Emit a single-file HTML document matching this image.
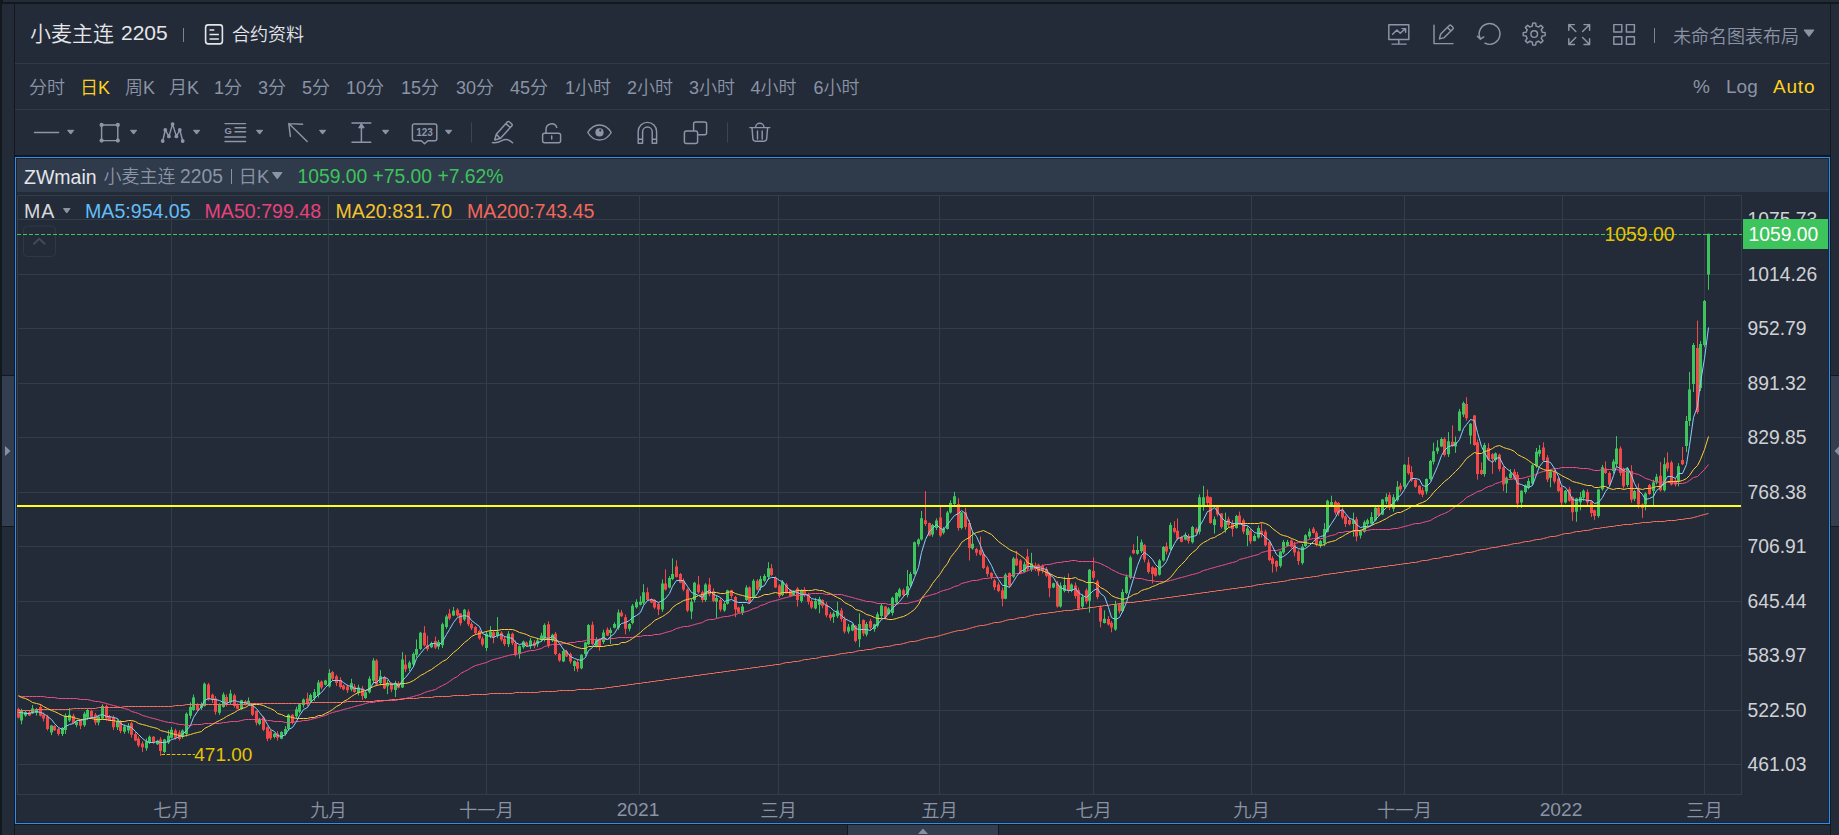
<!DOCTYPE html>
<html lang="zh"><head><meta charset="utf-8"><title>chart</title><style>
*{margin:0;padding:0;box-sizing:border-box}
html,body{width:1839px;height:835px;overflow:hidden;background:#13181d}
body{position:relative;font-family:"Liberation Sans","Noto Sans CJK SC",sans-serif;color:#8b94a6;font-weight:350}
.a{position:absolute;white-space:nowrap}
.p{position:absolute;background:#242b38}
.t{position:absolute;white-space:nowrap;height:30px;line-height:30px}
svg{position:absolute;overflow:visible}
.ic{fill:none;stroke:#8d96a8;stroke-width:1.45;stroke-linecap:round;stroke-linejoin:round}
</style></head><body>
<div class="p" style="left:3px;top:0;width:1836px;height:2px"></div>
<div class="p" style="left:2px;top:4px;width:12px;height:831px"></div>
<div class="p" style="left:2px;top:375px;width:12px;height:152px;background:#13181d"></div><div class="p" style="left:2px;top:376px;width:12px;height:150px;background:#333f50"></div>
<div class="p" style="left:1831px;top:4px;width:8px;height:831px"></div>
<div class="p" style="left:1831px;top:375px;width:8px;height:152px;background:#13181d"></div><div class="p" style="left:1831px;top:376px;width:8px;height:150px;background:#333f50"></div>
<div class="p" style="left:15px;top:4px;width:1815px;height:151px"></div>
<div class="p" style="left:15px;top:63px;width:1815px;height:1px;background:#313b48"></div>
<div class="p" style="left:15px;top:109px;width:1815px;height:1px;background:#313b48"></div>
<div class="p" style="left:15px;top:825px;width:1815px;height:10px"></div>
<div class="p" style="left:847px;top:825px;width:152px;height:10px;background:#13181d"></div><div class="p" style="left:848px;top:825px;width:150px;height:10px;background:#333f50"></div>
<svg style="left:0;top:0" width="1839" height="835"><path d="M5,446v10l5.5,-5z M1840,445.5v11l-5.5,-5.5z M918,834h10l-5,-5.5z" fill="#8790a3"/></svg>
<div class="p" style="left:15px;top:157px;width:1815px;height:667px;border:1px solid #2890f3"><div style="position:absolute;inset:0;border:1px solid #20262f"></div></div>
<div class="p" style="left:17px;top:159px;width:1811px;height:33px;background:#2f3a4a"></div>
<svg style="left:0;top:0" width="1839" height="835" viewBox="0 0 1839 835">
<path d="M17,219.5H1742 M17,274.5H1742 M17,328.5H1742 M17,383.5H1742 M17,437.5H1742 M17,492.5H1742 M17,546.5H1742 M17,601.5H1742 M17,655.5H1742 M17,710.5H1742 M17,764.5H1742 M171.5,195V795 M328.5,195V795 M486.5,195V795 M639.5,195V795 M778.5,195V795 M939.5,195V795 M1093.5,195V795 M1251.5,195V795 M1404.5,195V795 M1562.5,195V795 M1704.5,195V795 M17.5,195V795 M1741.5,195V795 M17,195.5H1742 M17,794.5H1742" stroke="#323d4a" stroke-width="1" fill="none"/>
<rect x="23.5" y="226" width="32" height="30.5" rx="4" fill="none" stroke="#2f3844" stroke-width="1"/><path d="M33.5,244.2l5.8,-5.4l5.8,5.4" fill="none" stroke="#414b59" stroke-width="2"/>
<path d="M17,234.5H1742" stroke="#3dc45d" stroke-width="1" stroke-dasharray="4 2" fill="none"/>
<path d="M18.5,707.7V718.5M29.5,710.4V716.0M40.5,704.2V716.5M43.5,712.6V721.4M47.5,714.7V730.6M54.5,725.2V731.0M58.5,727.8V735.8M73.5,713.8V724.0M80.5,719.7V729.1M91.5,709.7V718.6M95.5,712.9V725.1M106.5,704.5V720.9M109.5,715.0V720.9M113.5,715.4V730.0M120.5,720.1V733.2M131.5,721.6V737.7M135.5,731.7V741.2M138.5,736.4V747.3M142.5,741.3V752.1M153.5,736.2V744.1M160.5,737.2V755.9M175.5,728.8V739.6M179.5,730.0V740.6M197.5,703.2V711.0M208.5,682.9V700.8M212.5,693.6V703.0M215.5,696.2V714.7M226.5,694.6V706.3M234.5,693.7V707.6M237.5,703.3V709.4M245.5,700.0V705.7M252.5,703.4V716.1M256.5,710.3V725.4M263.5,716.2V731.1M267.5,726.4V741.3M270.5,729.7V740.0M277.5,731.2V740.6M292.5,714.1V724.2M307.5,692.7V706.0M321.5,680.5V689.3M332.5,670.9V681.0M336.5,674.7V686.0M340.5,677.2V688.5M343.5,684.4V690.3M347.5,684.4V693.0M354.5,684.0V692.8M362.5,686.0V699.8M376.5,659.1V686.0M384.5,675.9V689.2M391.5,682.5V692.1M398.5,681.4V688.5M405.5,654.8V672.1M424.5,626.1V646.5M427.5,635.7V651.1M435.5,636.6V649.0M449.5,608.9V620.2M457.5,608.2V616.5M460.5,613.1V625.7M468.5,609.4V626.1M471.5,622.1V630.1M475.5,626.1V634.9M479.5,629.8V639.7M482.5,636.6V646.4M493.5,630.4V643.3M501.5,631.2V641.3M504.5,636.1V646.1M512.5,632.6V645.2M515.5,640.5V656.5M526.5,641.5V646.6M534.5,640.2V648.3M548.5,621.3V647.8M555.5,632.0V655.2M559.5,652.9V661.9M566.5,649.7V657.0M570.5,652.5V663.6M577.5,659.4V671.8M592.5,621.6V645.5M599.5,638.3V650.7M607.5,627.4V636.1M621.5,609.9V616.9M625.5,614.5V634.4M647.5,587.5V601.0M651.5,598.3V603.2M654.5,598.9V608.9M658.5,602.5V615.2M665.5,569.3V590.6M676.5,560.3V577.5M680.5,572.9V583.2M683.5,578.4V591.3M687.5,588.4V612.1M698.5,576.0V593.8M702.5,590.5V602.5M709.5,577.9V596.4M713.5,588.3V602.2M720.5,597.7V611.6M731.5,589.7V598.4M735.5,595.9V617.2M738.5,606.7V613.1M749.5,586.4V604.0M757.5,579.2V590.5M771.5,564.1V576.3M775.5,576.5V588.0M779.5,584.1V597.8M786.5,582.8V593.7M790.5,589.2V596.8M797.5,587.2V606.6M804.5,587.3V597.0M808.5,592.8V604.5M811.5,599.4V608.9M822.5,599.3V608.3M826.5,602.0V617.3M830.5,612.0V620.7M841.5,607.9V621.6M844.5,616.5V633.5M855.5,625.0V642.5M863.5,619.3V636.0M870.5,618.9V629.9M885.5,606.0V619.5M903.5,588.5V597.2M925.5,491.1V526.0M929.5,522.6V536.2M940.5,506.8V536.8M958.5,498.2V530.7M965.5,507.8V529.5M969.5,520.2V560.5M976.5,547.9V555.7M980.5,536.5V555.7M983.5,551.8V569.0M987.5,565.4V576.8M991.5,572.1V579.3M994.5,578.8V590.0M998.5,582.1V592.2M1002.5,587.4V606.4M1009.5,572.4V587.1M1016.5,550.9V566.1M1020.5,559.1V574.2M1027.5,549.0V571.5M1035.5,562.6V571.2M1038.5,563.6V575.8M1042.5,564.4V573.4M1046.5,567.1V577.2M1049.5,572.3V597.2M1057.5,580.9V607.7M1068.5,573.5V592.9M1075.5,582.5V598.6M1078.5,587.6V610.4M1086.5,588.3V603.9M1093.5,557.6V580.0M1097.5,579.9V599.2M1100.5,605.3V627.5M1108.5,616.1V625.5M1111.5,621.0V632.3M1119.5,603.3V613.6M1133.5,544.2V554.1M1144.5,544.1V562.3M1148.5,559.4V573.6M1152.5,566.3V583.4M1155.5,567.1V576.5M1166.5,542.3V554.3M1174.5,521.2V533.3M1177.5,518.4V540.3M1181.5,535.8V542.3M1188.5,533.9V543.6M1196.5,527.3V534.4M1207.5,489.6V505.7M1210.5,496.7V523.7M1217.5,505.2V516.5M1221.5,513.1V528.5M1228.5,516.7V527.7M1232.5,520.2V536.6M1239.5,511.6V525.0M1243.5,518.5V534.0M1250.5,528.7V543.8M1261.5,523.1V537.4M1265.5,529.6V546.4M1269.5,541.1V561.2M1272.5,556.1V572.6M1276.5,560.3V571.6M1291.5,539.3V548.4M1294.5,541.9V556.3M1298.5,549.4V564.9M1313.5,527.0V533.5M1316.5,531.0V546.4M1335.5,500.5V514.8M1338.5,502.0V516.1M1342.5,507.4V519.2M1345.5,515.4V527.0M1349.5,517.5V525.4M1356.5,516.9V541.3M1378.5,504.9V516.3M1389.5,492.3V510.1M1400.5,483.0V491.9M1408.5,457.0V474.8M1411.5,466.2V481.9M1415.5,478.7V487.7M1419.5,485.3V494.6M1422.5,487.4V497.3M1444.5,437.2V456.6M1452.5,425.4V446.9M1466.5,397.2V420.7M1474.5,414.9V445.8M1477.5,439.5V479.6M1481.5,462.4V475.0M1488.5,443.2V460.8M1492.5,453.1V473.9M1499.5,453.6V471.4M1503.5,465.9V491.1M1514.5,469.0V479.9M1517.5,472.0V508.0M1543.5,442.3V461.4M1547.5,455.1V482.0M1554.5,469.5V483.6M1558.5,477.3V492.4M1561.5,485.9V505.1M1569.5,486.8V501.8M1572.5,496.6V520.8M1587.5,489.4V505.6M1591.5,500.5V517.0M1594.5,509.6V519.8M1605.5,461.4V474.0M1609.5,471.4V486.5M1620.5,446.4V475.8M1623.5,467.7V488.9M1631.5,465.2V502.6M1638.5,483.4V508.4M1642.5,503.5V517.9M1649.5,483.9V494.9M1660.5,462.0V491.5M1667.5,452.4V471.5M1671.5,460.6V485.5M1675.5,478.1V486.5M1682.5,447.0V465.0M1697.5,320.6V414.0" stroke="#f24848" stroke-width="1" fill="none"/>
<path d="M21.5,708.8V724.3M25.5,710.3V716.8M32.5,705.1V713.9M36.5,708.0V715.5M51.5,725.0V735.2M62.5,726.9V736.1M65.5,713.6V733.9M69.5,708.0V721.9M76.5,720.7V727.2M84.5,711.8V726.9M87.5,708.7V720.1M98.5,715.3V725.4M102.5,704.2V719.3M117.5,719.3V730.0M124.5,724.4V733.9M128.5,723.1V733.4M146.5,738.5V750.8M149.5,735.5V744.0M157.5,739.9V745.0M164.5,738.8V753.2M168.5,730.0V744.0M171.5,727.0V738.4M182.5,729.4V738.6M186.5,712.4V736.6M190.5,702.3V718.6M193.5,694.6V710.8M201.5,702.4V710.0M204.5,682.5V706.6M219.5,703.3V714.8M223.5,692.4V707.7M230.5,689.8V704.8M241.5,699.7V710.0M248.5,697.5V704.6M259.5,717.8V725.3M274.5,733.0V738.4M281.5,731.1V739.2M285.5,726.2V735.7M288.5,713.8V730.9M296.5,706.7V718.5M299.5,703.0V713.3M303.5,698.5V707.6M310.5,693.5V702.0M314.5,689.0V700.8M318.5,680.1V697.6M325.5,679.8V685.4M329.5,669.2V687.6M351.5,678.8V691.3M358.5,684.7V695.5M365.5,690.5V698.9M369.5,676.3V693.5M373.5,658.1V683.6M380.5,670.2V685.4M387.5,680.0V694.1M395.5,680.8V697.0M402.5,652.0V687.9M409.5,660.7V671.0M413.5,652.3V667.1M416.5,639.5V657.4M420.5,631.8V650.2M431.5,641.7V648.1M438.5,639.9V649.5M442.5,622.6V648.0M446.5,614.8V628.9M453.5,606.9V616.1M464.5,608.9V621.1M486.5,631.4V650.9M490.5,626.1V638.2M497.5,617.1V637.9M508.5,631.1V647.1M519.5,645.4V658.7M523.5,640.6V648.8M530.5,638.0V648.9M537.5,637.9V647.1M541.5,632.8V641.0M544.5,623.4V641.5M552.5,633.8V642.0M563.5,648.7V662.1M574.5,660.3V671.1M581.5,654.1V669.4M585.5,641.8V656.3M588.5,624.0V645.1M596.5,637.2V647.5M603.5,629.7V644.0M610.5,627.7V644.0M614.5,622.3V628.4M618.5,609.5V629.8M629.5,623.2V631.3M632.5,604.0V624.3M636.5,599.3V608.5M640.5,596.1V605.5M643.5,584.2V604.6M662.5,579.4V611.9M669.5,576.1V588.4M672.5,558.4V580.2M691.5,599.0V619.1M694.5,581.9V602.5M705.5,583.1V601.7M716.5,595.4V618.1M724.5,602.2V611.8M727.5,589.7V604.6M742.5,604.0V615.1M746.5,585.3V601.1M753.5,579.1V597.9M760.5,575.9V590.4M764.5,574.1V581.9M768.5,562.2V579.8M782.5,580.0V596.1M793.5,590.3V596.1M801.5,589.3V602.8M815.5,597.9V609.4M819.5,596.8V613.3M833.5,611.7V622.9M837.5,601.8V618.0M848.5,624.0V633.7M852.5,623.7V631.2M859.5,613.3V647.2M866.5,622.0V636.5M874.5,623.8V631.7M877.5,611.9V627.5M881.5,603.6V618.2M888.5,607.2V614.8M892.5,596.7V615.5M896.5,592.0V605.0M899.5,587.8V597.9M907.5,570.0V597.4M910.5,571.8V587.5M914.5,541.6V574.7M918.5,538.3V546.5M921.5,511.0V540.6M932.5,523.8V536.8M936.5,518.4V530.1M943.5,527.1V534.3M947.5,510.9V529.6M950.5,500.3V513.6M954.5,491.9V506.9M961.5,512.0V529.5M972.5,530.8V549.7M1005.5,573.1V599.3M1013.5,556.9V578.0M1024.5,561.7V572.5M1031.5,552.8V571.7M1053.5,582.7V588.2M1060.5,582.5V607.6M1064.5,576.7V592.3M1071.5,583.4V592.2M1082.5,594.1V609.3M1089.5,569.0V612.6M1104.5,610.3V623.5M1115.5,600.7V630.8M1122.5,589.1V612.4M1126.5,574.6V594.3M1130.5,555.7V579.2M1137.5,536.1V554.7M1141.5,539.5V553.0M1159.5,559.1V575.6M1163.5,546.0V561.6M1170.5,522.6V550.5M1185.5,532.5V540.4M1192.5,525.9V543.5M1199.5,494.4V534.4M1203.5,485.8V510.7M1214.5,516.5V533.7M1225.5,512.6V532.7M1236.5,514.9V528.7M1247.5,526.1V546.1M1254.5,534.2V541.5M1258.5,525.5V538.6M1280.5,550.8V567.7M1283.5,540.0V553.9M1287.5,539.9V546.3M1302.5,544.0V564.7M1305.5,534.1V547.2M1309.5,528.5V538.8M1320.5,539.8V547.8M1324.5,523.1V546.1M1327.5,499.7V532.3M1331.5,495.7V506.3M1353.5,512.6V536.6M1360.5,529.6V538.5M1364.5,520.4V532.7M1367.5,518.7V526.3M1371.5,512.2V524.5M1375.5,506.3V521.3M1382.5,498.9V515.2M1386.5,493.4V504.2M1393.5,494.3V511.6M1397.5,481.0V501.5M1404.5,464.1V488.9M1426.5,478.3V494.4M1430.5,459.9V480.5M1433.5,442.7V464.4M1437.5,440.2V453.9M1441.5,437.3V447.1M1448.5,432.1V457.0M1455.5,436.5V452.8M1459.5,408.9V431.3M1463.5,401.5V417.0M1470.5,423.1V444.2M1484.5,442.8V476.6M1495.5,452.4V462.1M1506.5,476.5V493.0M1510.5,469.1V478.6M1521.5,490.2V508.0M1525.5,484.3V493.8M1528.5,478.1V489.3M1532.5,464.1V485.0M1536.5,448.0V467.9M1539.5,445.1V456.6M1550.5,469.0V487.3M1565.5,490.0V503.6M1576.5,497.8V521.8M1580.5,492.1V510.3M1583.5,489.4V500.8M1598.5,488.8V517.8M1602.5,464.9V490.8M1613.5,459.2V473.4M1616.5,436.1V466.9M1627.5,467.8V486.9M1634.5,489.7V501.1M1645.5,492.3V510.3M1653.5,479.8V505.5M1656.5,473.9V484.4M1664.5,457.6V491.6M1678.5,463.2V486.3M1686.5,416.0V452.0M1689.5,372.0V426.0M1693.5,343.0V392.0M1700.5,341.0V391.0M1704.5,300.0V347.0M1708.5,233.8V289.8" stroke="#3dc45d" stroke-width="1" fill="none"/>
<path d="M17,709.0h3V717.6h-3zM28,712.1h3V715.4h-3zM39,707.0h3V715.7h-3zM42,714.7h3V718.6h-3zM46,716.6h3V729.1h-3zM53,726.0h3V730.2h-3zM57,729.1h3V733.9h-3zM72,715.7h3V723.3h-3zM79,721.0h3V725.7h-3zM90,710.9h3V716.7h-3zM94,714.7h3V722.4h-3zM105,706.1h3V718.5h-3zM108,716.7h3V720.3h-3zM112,717.6h3V727.2h-3zM119,721.4h3V731.0h-3zM130,723.3h3V734.8h-3zM134,733.9h3V740.6h-3zM137,738.7h3V745.4h-3zM141,743.4h3V747.3h-3zM152,736.8h3V742.5h-3zM159,739.6h3V751.1h-3zM174,730.4h3V737.7h-3zM178,732.5h3V739.1h-3zM196,704.2h3V709.9h-3zM207,684.4h3V699.4h-3zM211,694.8h3V700.1h-3zM214,698.4h3V711.8h-3zM225,697.0h3V703.6h-3zM233,695.2h3V706.1h-3zM236,705.3h3V708.8h-3zM244,701.4h3V705.0h-3zM251,704.2h3V714.7h-3zM255,710.9h3V722.8h-3zM262,717.6h3V729.7h-3zM266,727.2h3V738.7h-3zM269,731.3h3V738.3h-3zM276,733.8h3V737.8h-3zM291,714.7h3V722.4h-3zM306,698.4h3V704.2h-3zM320,681.5h3V687.5h-3zM331,672.1h3V678.8h-3zM335,676.3h3V683.1h-3zM339,680.1h3V687.0h-3zM342,685.5h3V689.3h-3zM346,686.4h3V690.3h-3zM353,686.5h3V692.1h-3zM361,688.4h3V696.0h-3zM375,660.6h3V684.5h-3zM383,676.9h3V688.4h-3zM390,683.3h3V689.5h-3zM397,683.3h3V687.7h-3zM404,664.4h3V669.2h-3zM423,632.8h3V645.2h-3zM426,645.2h3V649.1h-3zM434,641.0h3V647.6h-3zM448,613.6h3V618.4h-3zM456,609.8h3V615.6h-3zM459,613.6h3V623.2h-3zM467,611.7h3V624.2h-3zM470,623.9h3V628.2h-3zM474,626.9h3V633.0h-3zM478,630.9h3V638.5h-3zM481,638.4h3V644.5h-3zM492,632.2h3V637.2h-3zM500,632.8h3V639.5h-3zM503,639.0h3V643.9h-3zM511,633.8h3V643.3h-3zM514,643.3h3V653.9h-3zM525,642.6h3V645.9h-3zM533,642.5h3V646.1h-3zM547,624.2h3V645.2h-3zM554,633.8h3V653.9h-3zM558,653.9h3V660.6h-3zM565,651.3h3V656.5h-3zM569,653.9h3V661.5h-3zM576,661.9h3V668.8h-3zM591,624.8h3V644.0h-3zM598,639.2h3V646.9h-3zM606,629.6h3V635.4h-3zM620,612.4h3V616.2h-3zM624,617.2h3V628.7h-3zM646,592.3h3V599.9h-3zM650,599.2h3V602.6h-3zM653,599.9h3V607.6h-3zM657,603.8h3V609.5h-3zM664,583.6h3V589.4h-3zM675,566.4h3V576.9h-3zM679,574.1h3V582.7h-3zM682,580.8h3V589.4h-3zM686,589.4h3V610.5h-3zM697,584.6h3V592.3h-3zM701,592.3h3V599.9h-3zM708,584.6h3V594.2h-3zM712,591.3h3V600.9h-3zM719,599.9h3V609.5h-3zM730,590.3h3V596.1h-3zM734,597.0h3V609.5h-3zM737,607.6h3V612.4h-3zM748,587.5h3V602.8h-3zM756,580.8h3V589.4h-3zM770,568.3h3V575.0h-3zM774,577.9h3V587.5h-3zM778,585.6h3V596.1h-3zM785,584.6h3V593.2h-3zM789,590.3h3V596.1h-3zM796,588.4h3V599.9h-3zM803,589.7h3V594.8h-3zM807,595.1h3V601.8h-3zM810,600.9h3V607.6h-3zM821,599.9h3V605.7h-3zM825,604.7h3V615.2h-3zM829,614.3h3V618.1h-3zM840,610.5h3V619.1h-3zM843,619.1h3V631.5h-3zM854,625.8h3V641.1h-3zM862,620.0h3V633.4h-3zM869,621.0h3V627.7h-3zM884,606.6h3V617.2h-3zM902,590.2h3V594.9h-3zM924,520.2h3V524.1h-3zM928,523.1h3V535.6h-3zM939,517.4h3V535.6h-3zM957,503.9h3V527.9h-3zM964,512.2h3V526.9h-3zM968,523.1h3V548.0h-3zM975,549.0h3V552.8h-3zM979,549.9h3V554.7h-3zM982,553.8h3V568.1h-3zM986,567.2h3V573.9h-3zM990,572.9h3V576.7h-3zM993,580.6h3V587.3h-3zM997,584.4h3V591.1h-3zM1001,590.2h3V598.8h-3zM1008,572.9h3V585.4h-3zM1015,558.5h3V565.2h-3zM1019,560.5h3V572.9h-3zM1026,556.6h3V569.1h-3zM1034,565.4h3V568.9h-3zM1037,564.8h3V571.4h-3zM1041,565.9h3V570.4h-3zM1045,569.1h3V575.8h-3zM1048,573.9h3V588.2h-3zM1056,583.4h3V606.4h-3zM1067,578.7h3V591.1h-3zM1074,585.4h3V595.9h-3zM1077,590.2h3V608.4h-3zM1085,590.2h3V601.6h-3zM1092,571.0h3V577.7h-3zM1096,581.5h3V596.9h-3zM1099,607.4h3V621.4h-3zM1107,618.9h3V624.6h-3zM1110,622.7h3V627.5h-3zM1118,604.5h3V611.2h-3zM1132,549.9h3V553.2h-3zM1143,545.1h3V559.5h-3zM1147,562.4h3V572.0h-3zM1151,567.2h3V573.9h-3zM1154,568.1h3V575.8h-3zM1165,546.3h3V551.6h-3zM1173,527.9h3V531.7h-3zM1176,530.8h3V538.5h-3zM1180,537.2h3V541.7h-3zM1187,536.0h3V541.0h-3zM1195,528.8h3V532.8h-3zM1206,496.3h3V503.0h-3zM1209,497.3h3V523.1h-3zM1216,506.9h3V514.5h-3zM1220,513.6h3V527.0h-3zM1227,519.3h3V525.1h-3zM1231,523.1h3V528.9h-3zM1238,515.5h3V524.1h-3zM1242,520.3h3V531.8h-3zM1249,530.8h3V541.3h-3zM1260,530.8h3V534.6h-3zM1264,531.8h3V545.2h-3zM1268,541.9h3V560.1h-3zM1271,558.2h3V563.9h-3zM1275,561.0h3V566.8h-3zM1290,540.6h3V546.7h-3zM1293,544.8h3V552.5h-3zM1297,551.5h3V561.1h-3zM1312,528.7h3V532.9h-3zM1315,532.7h3V544.2h-3zM1334,502.1h3V512.6h-3zM1337,503.0h3V513.6h-3zM1341,509.7h3V517.4h-3zM1344,516.4h3V524.1h-3zM1348,520.1h3V524.3h-3zM1355,519.3h3V536.6h-3zM1377,507.8h3V515.5h-3zM1388,495.0h3V507.8h-3zM1399,485.8h3V489.6h-3zM1407,464.7h3V473.3h-3zM1410,472.0h3V480.4h-3zM1414,480.0h3V486.7h-3zM1418,485.8h3V493.4h-3zM1421,490.3h3V494.7h-3zM1443,438.9h3V455.1h-3zM1451,441.7h3V445.9h-3zM1465,403.9h3V418.3h-3zM1473,415.4h3V445.1h-3zM1476,442.3h3V473.9h-3zM1480,470.0h3V473.9h-3zM1487,448.0h3V459.5h-3zM1491,454.3h3V458.9h-3zM1498,454.7h3V469.1h-3zM1502,467.2h3V484.4h-3zM1513,471.8h3V477.8h-3zM1516,474.8h3V503.6h-3zM1542,447.4h3V460.5h-3zM1546,457.6h3V479.6h-3zM1553,472.0h3V481.5h-3zM1557,478.7h3V491.1h-3zM1560,487.3h3V502.6h-3zM1568,489.2h3V500.7h-3zM1571,497.2h3V512.2h-3zM1586,492.1h3V502.6h-3zM1590,501.6h3V513.1h-3zM1593,510.3h3V516.0h-3zM1604,468.5h3V472.9h-3zM1608,472.9h3V484.4h-3zM1619,448.6h3V472.9h-3zM1622,468.5h3V486.3h-3zM1630,471.0h3V499.7h-3zM1637,489.2h3V504.5h-3zM1641,504.5h3V508.0h-3zM1648,485.0h3V494.0h-3zM1659,475.8h3V490.2h-3zM1666,462.4h3V468.5h-3zM1670,462.4h3V484.4h-3zM1674,480.6h3V484.4h-3zM1681,460.1h3V464.3h-3zM1696,348.0h3V412.0h-3z" fill="#f24848"/>
<path d="M20,710.9h3V720.5h-3zM24,712.1h3V715.4h-3zM31,708.5h3V713.2h-3zM35,709.6h3V712.9h-3zM50,725.6h3V732.5h-3zM61,727.9h3V734.1h-3zM64,715.7h3V730.0h-3zM68,714.7h3V720.5h-3zM75,721.7h3V725.0h-3zM83,713.8h3V725.2h-3zM86,709.9h3V717.6h-3zM97,716.5h3V722.5h-3zM101,706.1h3V718.5h-3zM116,721.3h3V727.3h-3zM123,726.4h3V731.8h-3zM127,725.7h3V730.5h-3zM145,741.5h3V748.2h-3zM148,736.7h3V742.5h-3zM156,740.7h3V744.3h-3zM163,739.6h3V752.1h-3zM167,735.8h3V742.5h-3zM170,729.7h3V737.7h-3zM181,730.6h3V737.1h-3zM185,713.8h3V733.9h-3zM189,707.0h3V715.7h-3zM192,697.5h3V709.9h-3zM200,704.1h3V708.1h-3zM203,683.7h3V706.1h-3zM218,705.1h3V712.8h-3zM222,694.6h3V707.0h-3zM229,693.6h3V702.3h-3zM240,700.3h3V709.0h-3zM247,700.8h3V703.8h-3zM258,718.7h3V724.1h-3zM273,733.7h3V737.1h-3zM280,732.0h3V738.7h-3zM284,729.1h3V733.9h-3zM287,714.7h3V729.1h-3zM295,709.3h3V716.3h-3zM298,704.2h3V711.8h-3zM302,699.4h3V705.1h-3zM309,694.9h3V701.0h-3zM313,691.9h3V698.2h-3zM317,682.6h3V695.1h-3zM324,680.4h3V684.8h-3zM328,673.0h3V686.4h-3zM350,683.3h3V689.6h-3zM357,687.4h3V693.1h-3zM364,692.2h3V697.9h-3zM368,678.8h3V692.2h-3zM372,660.6h3V680.7h-3zM379,676.3h3V683.1h-3zM386,682.7h3V686.3h-3zM394,683.0h3V689.9h-3zM401,659.6h3V687.4h-3zM408,662.6h3V668.2h-3zM412,653.9h3V664.4h-3zM415,649.1h3V654.8h-3zM419,632.8h3V649.1h-3zM430,643.2h3V647.3h-3zM437,641.9h3V646.7h-3zM441,624.2h3V645.2h-3zM445,616.5h3V627.0h-3zM452,610.8h3V615.6h-3zM463,609.8h3V619.4h-3zM485,633.8h3V648.1h-3zM489,631.4h3V636.1h-3zM496,631.8h3V635.7h-3zM507,633.8h3V644.3h-3zM518,646.2h3V653.9h-3zM522,641.4h3V647.2h-3zM529,640.5h3V646.2h-3zM536,640.6h3V644.2h-3zM540,635.6h3V639.5h-3zM543,625.1h3V638.5h-3zM551,634.7h3V640.5h-3zM562,651.0h3V661.5h-3zM573,660.9h3V666.0h-3zM580,654.8h3V668.2h-3zM584,642.4h3V653.9h-3zM587,625.1h3V644.3h-3zM595,639.7h3V646.3h-3zM602,632.5h3V642.1h-3zM609,629.9h3V633.1h-3zM613,623.9h3V627.7h-3zM617,612.4h3V627.7h-3zM628,623.9h3V628.7h-3zM631,605.7h3V622.9h-3zM635,602.1h3V607.3h-3zM639,601.8h3V604.7h-3zM642,592.3h3V602.8h-3zM661,583.6h3V609.5h-3zM668,577.9h3V587.5h-3zM671,574.1h3V578.9h-3zM690,601.8h3V611.4h-3zM693,582.7h3V599.9h-3zM704,584.6h3V599.9h-3zM715,598.0h3V601.8h-3zM723,603.8h3V610.5h-3zM726,590.3h3V603.8h-3zM741,606.6h3V612.4h-3zM745,587.5h3V599.9h-3zM752,580.8h3V597.0h-3zM759,578.9h3V587.5h-3zM763,576.0h3V580.8h-3zM767,568.3h3V576.9h-3zM781,581.7h3V595.1h-3zM792,590.9h3V595.5h-3zM800,590.3h3V600.9h-3zM814,600.9h3V608.5h-3zM818,598.9h3V604.8h-3zM832,613.5h3V617.0h-3zM836,610.5h3V616.2h-3zM847,626.7h3V631.5h-3zM851,624.8h3V630.6h-3zM858,623.9h3V639.2h-3zM865,623.9h3V634.4h-3zM873,624.3h3V629.2h-3zM876,614.3h3V625.8h-3zM880,605.5h3V616.0h-3zM887,608.4h3V614.1h-3zM891,597.8h3V613.1h-3zM895,593.0h3V602.6h-3zM898,589.6h3V596.5h-3zM906,586.3h3V594.9h-3zM909,573.9h3V585.4h-3zM913,542.3h3V573.9h-3zM917,539.4h3V544.2h-3zM920,518.3h3V539.4h-3zM931,525.0h3V534.6h-3zM935,520.6h3V527.9h-3zM942,528.9h3V532.7h-3zM946,512.6h3V528.9h-3zM949,503.0h3V512.6h-3zM953,496.3h3V503.9h-3zM960,512.6h3V527.9h-3zM971,543.7h3V548.5h-3zM1004,574.8h3V598.8h-3zM1012,558.5h3V576.7h-3zM1023,564.3h3V572.0h-3zM1030,563.3h3V569.1h-3zM1052,583.3h3V587.4h-3zM1059,585.4h3V606.4h-3zM1063,585.0h3V591.1h-3zM1070,584.4h3V590.7h-3zM1081,596.9h3V606.4h-3zM1088,569.7h3V600.7h-3zM1103,618.7h3V622.9h-3zM1114,604.5h3V629.4h-3zM1121,592.1h3V611.2h-3zM1125,576.7h3V593.0h-3zM1129,557.6h3V577.7h-3zM1136,550.0h3V553.7h-3zM1140,542.3h3V551.3h-3zM1158,560.5h3V574.8h-3zM1162,547.0h3V560.5h-3zM1169,525.0h3V549.0h-3zM1184,535.5h3V539.6h-3zM1191,527.0h3V542.3h-3zM1198,497.3h3V531.8h-3zM1202,497.3h3V504.9h-3zM1213,519.3h3V525.1h-3zM1224,521.2h3V529.8h-3zM1235,516.1h3V527.9h-3zM1246,528.4h3V535.1h-3zM1253,536.1h3V540.9h-3zM1257,527.9h3V537.5h-3zM1279,551.5h3V565.9h-3zM1282,541.9h3V552.5h-3zM1286,541.9h3V545.8h-3zM1301,546.7h3V563.0h-3zM1304,535.2h3V546.1h-3zM1308,531.4h3V536.6h-3zM1319,540.9h3V545.6h-3zM1323,528.9h3V543.3h-3zM1326,500.7h3V531.8h-3zM1330,502.1h3V504.9h-3zM1352,520.2h3V524.1h-3zM1359,530.8h3V535.6h-3zM1363,522.2h3V531.8h-3zM1366,520.2h3V524.1h-3zM1370,516.9h3V523.7h-3zM1374,507.8h3V520.3h-3zM1381,499.6h3V514.5h-3zM1385,496.9h3V501.5h-3zM1392,497.3h3V508.8h-3zM1396,486.7h3V500.2h-3zM1403,464.7h3V486.7h-3zM1425,479.1h3V491.5h-3zM1429,460.9h3V479.1h-3zM1432,451.3h3V461.8h-3zM1436,447.5h3V451.3h-3zM1440,438.9h3V446.5h-3zM1447,441.3h3V454.2h-3zM1454,441.9h3V446.4h-3zM1458,411.6h3V430.8h-3zM1462,403.0h3V414.5h-3zM1469,423.7h3V435.6h-3zM1483,445.1h3V473.9h-3zM1494,453.2h3V460.0h-3zM1505,477.7h3V483.4h-3zM1509,473.5h3V478.1h-3zM1520,490.7h3V502.6h-3zM1524,485.4h3V492.1h-3zM1527,481.0h3V487.8h-3zM1531,465.2h3V483.4h-3zM1535,451.8h3V466.2h-3zM1538,449.9h3V453.8h-3zM1549,471.6h3V477.7h-3zM1564,490.7h3V502.6h-3zM1575,498.4h3V511.8h-3zM1579,497.1h3V502.3h-3zM1582,490.7h3V497.8h-3zM1597,489.6h3V516.0h-3zM1601,467.2h3V489.2h-3zM1612,461.4h3V471.0h-3zM1615,448.6h3V464.3h-3zM1626,469.1h3V485.0h-3zM1633,491.1h3V498.8h-3zM1644,493.4h3V504.5h-3zM1652,482.5h3V491.1h-3zM1655,476.7h3V482.5h-3zM1663,464.3h3V490.2h-3zM1677,466.2h3V481.5h-3zM1685,421.0h3V446.0h-3zM1688,389.5h3V421.0h-3zM1692,345.0h3V384.0h-3zM1699,344.0h3V388.0h-3zM1703,301.0h3V345.0h-3zM1707,233.8h3V274.6h-3z" fill="#3dc45d"/>
<polyline points="18.5,696.5 21.5,696.5 25.5,696.5 29.5,696.5 32.5,696.5 36.5,696.5 40.5,696.5 43.5,696.5 47.5,697.5 51.5,697.5 54.5,697.5 58.5,698.5 62.5,698.5 65.5,698.5 69.5,698.5 73.5,698.5 76.5,698.5 80.5,699.5 84.5,699.5 87.5,699.5 91.5,700.5 95.5,701.5 98.5,701.5 102.5,702.5 106.5,703.5 109.5,704.5 113.5,705.5 117.5,706.5 120.5,707.5 124.5,708.5 128.5,709.5 131.5,711.5 135.5,712.5 138.5,713.5 142.5,715.5 146.5,716.5 149.5,717.5 153.5,718.5 157.5,719.5 160.5,720.5 164.5,721.5 168.5,722.5 171.5,722.5 175.5,723.5 179.5,724.5 182.5,724.5 186.5,725.5 190.5,725.5 193.5,724.5 197.5,724.5 201.5,724.5 204.5,723.5 208.5,723.5 212.5,723.5 215.5,723.5 219.5,723.5 223.5,722.5 226.5,722.5 230.5,721.5 234.5,721.5 237.5,721.5 241.5,720.5 245.5,719.5 248.5,719.5 252.5,719.5 256.5,719.5 259.5,719.5 263.5,719.5 267.5,720.5 270.5,720.5 274.5,721.5 277.5,721.5 281.5,721.5 285.5,722.5 288.5,722.5 292.5,722.5 296.5,721.5 299.5,721.5 303.5,720.5 307.5,720.5 310.5,719.5 314.5,718.5 318.5,717.5 321.5,716.5 325.5,715.5 329.5,713.5 332.5,712.5 336.5,711.5 340.5,710.5 343.5,709.5 347.5,708.5 351.5,707.5 354.5,706.5 358.5,705.5 362.5,704.5 365.5,703.5 369.5,702.5 373.5,702.5 376.5,701.5 380.5,701.5 384.5,700.5 387.5,700.5 391.5,700.5 395.5,700.5 398.5,699.5 402.5,698.5 405.5,698.5 409.5,697.5 413.5,696.5 416.5,695.5 420.5,694.5 424.5,692.5 427.5,691.5 431.5,690.5 435.5,689.5 438.5,687.5 442.5,685.5 446.5,683.5 449.5,681.5 453.5,678.5 457.5,676.5 460.5,673.5 464.5,671.5 468.5,669.5 471.5,667.5 475.5,665.5 479.5,664.5 482.5,663.5 486.5,662.5 490.5,660.5 493.5,659.5 497.5,658.5 501.5,657.5 504.5,656.5 508.5,655.5 512.5,654.5 515.5,654.5 519.5,653.5 523.5,652.5 526.5,651.5 530.5,650.5 534.5,650.5 537.5,649.5 541.5,648.5 544.5,646.5 548.5,645.5 552.5,644.5 555.5,644.5 559.5,644.5 563.5,643.5 566.5,643.5 570.5,642.5 574.5,642.5 577.5,641.5 581.5,641.5 585.5,640.5 588.5,639.5 592.5,639.5 596.5,639.5 599.5,639.5 603.5,639.5 607.5,639.5 610.5,638.5 614.5,638.5 618.5,637.5 621.5,637.5 625.5,637.5 629.5,637.5 632.5,637.5 636.5,636.5 640.5,636.5 643.5,635.5 647.5,635.5 651.5,635.5 654.5,634.5 658.5,634.5 662.5,633.5 665.5,632.5 669.5,631.5 672.5,630.5 676.5,628.5 680.5,627.5 683.5,626.5 687.5,626.5 691.5,625.5 694.5,624.5 698.5,623.5 702.5,622.5 705.5,620.5 709.5,619.5 713.5,619.5 716.5,618.5 720.5,617.5 724.5,616.5 727.5,616.5 731.5,615.5 735.5,614.5 738.5,613.5 742.5,612.5 746.5,611.5 749.5,610.5 753.5,608.5 757.5,607.5 760.5,605.5 764.5,604.5 768.5,602.5 771.5,601.5 775.5,600.5 779.5,599.5 782.5,598.5 786.5,597.5 790.5,596.5 793.5,595.5 797.5,595.5 801.5,595.5 804.5,594.5 808.5,594.5 811.5,593.5 815.5,593.5 819.5,593.5 822.5,593.5 826.5,594.5 830.5,594.5 833.5,594.5 837.5,594.5 841.5,594.5 844.5,595.5 848.5,596.5 852.5,597.5 855.5,598.5 859.5,599.5 863.5,600.5 866.5,601.5 870.5,601.5 874.5,602.5 877.5,603.5 881.5,603.5 885.5,603.5 888.5,604.5 892.5,604.5 896.5,604.5 899.5,603.5 903.5,603.5 907.5,603.5 910.5,602.5 914.5,601.5 918.5,600.5 921.5,598.5 925.5,596.5 929.5,595.5 932.5,594.5 936.5,593.5 940.5,591.5 943.5,590.5 947.5,589.5 950.5,588.5 954.5,586.5 958.5,585.5 961.5,583.5 965.5,582.5 969.5,581.5 972.5,580.5 976.5,580.5 980.5,579.5 983.5,578.5 987.5,578.5 991.5,577.5 994.5,577.5 998.5,577.5 1002.5,577.5 1005.5,576.5 1009.5,576.5 1013.5,574.5 1016.5,573.5 1020.5,573.5 1024.5,572.5 1027.5,570.5 1031.5,569.5 1035.5,568.5 1038.5,567.5 1042.5,565.5 1046.5,564.5 1049.5,564.5 1053.5,563.5 1057.5,562.5 1060.5,562.5 1064.5,561.5 1068.5,561.5 1071.5,560.5 1075.5,560.5 1078.5,561.5 1082.5,561.5 1086.5,561.5 1089.5,561.5 1093.5,561.5 1097.5,562.5 1100.5,563.5 1104.5,565.5 1108.5,567.5 1111.5,569.5 1115.5,571.5 1119.5,573.5 1122.5,574.5 1126.5,575.5 1130.5,576.5 1133.5,577.5 1137.5,578.5 1141.5,578.5 1144.5,579.5 1148.5,580.5 1152.5,580.5 1155.5,581.5 1159.5,581.5 1163.5,581.5 1166.5,581.5 1170.5,580.5 1174.5,579.5 1177.5,578.5 1181.5,577.5 1185.5,576.5 1188.5,575.5 1192.5,574.5 1196.5,573.5 1199.5,572.5 1203.5,570.5 1207.5,569.5 1210.5,568.5 1214.5,567.5 1217.5,566.5 1221.5,565.5 1225.5,564.5 1228.5,563.5 1232.5,562.5 1236.5,561.5 1239.5,559.5 1243.5,558.5 1247.5,557.5 1250.5,556.5 1254.5,555.5 1258.5,554.5 1261.5,552.5 1265.5,551.5 1269.5,550.5 1272.5,550.5 1276.5,550.5 1280.5,549.5 1283.5,547.5 1287.5,546.5 1291.5,544.5 1294.5,543.5 1298.5,542.5 1302.5,541.5 1305.5,540.5 1309.5,539.5 1313.5,538.5 1316.5,538.5 1320.5,538.5 1324.5,538.5 1327.5,536.5 1331.5,535.5 1335.5,534.5 1338.5,532.5 1342.5,532.5 1345.5,531.5 1349.5,531.5 1353.5,531.5 1356.5,531.5 1360.5,530.5 1364.5,530.5 1367.5,530.5 1371.5,529.5 1375.5,529.5 1378.5,529.5 1382.5,529.5 1386.5,529.5 1389.5,529.5 1393.5,528.5 1397.5,528.5 1400.5,527.5 1404.5,526.5 1408.5,525.5 1411.5,524.5 1415.5,523.5 1419.5,523.5 1422.5,522.5 1426.5,521.5 1430.5,520.5 1433.5,518.5 1437.5,516.5 1441.5,514.5 1444.5,513.5 1448.5,511.5 1452.5,508.5 1455.5,506.5 1459.5,503.5 1463.5,500.5 1466.5,497.5 1470.5,495.5 1474.5,493.5 1477.5,491.5 1481.5,490.5 1484.5,488.5 1488.5,486.5 1492.5,485.5 1495.5,483.5 1499.5,482.5 1503.5,480.5 1506.5,479.5 1510.5,479.5 1514.5,478.5 1517.5,478.5 1521.5,478.5 1525.5,477.5 1528.5,476.5 1532.5,475.5 1536.5,474.5 1539.5,472.5 1543.5,471.5 1547.5,470.5 1550.5,469.5 1554.5,468.5 1558.5,468.5 1561.5,467.5 1565.5,467.5 1569.5,467.5 1572.5,467.5 1576.5,467.5 1580.5,468.5 1583.5,468.5 1587.5,468.5 1591.5,469.5 1594.5,470.5 1598.5,470.5 1602.5,469.5 1605.5,469.5 1609.5,469.5 1613.5,469.5 1616.5,469.5 1620.5,470.5 1623.5,471.5 1627.5,471.5 1631.5,472.5 1634.5,473.5 1638.5,474.5 1642.5,476.5 1645.5,478.5 1649.5,479.5 1653.5,481.5 1656.5,481.5 1660.5,482.5 1664.5,481.5 1667.5,482.5 1671.5,482.5 1675.5,483.5 1678.5,483.5 1682.5,483.5 1686.5,482.5 1689.5,480.5 1693.5,477.5 1697.5,476.5 1700.5,473.5 1704.5,469.5 1708.5,464.5" fill="none" stroke="#ec4d88" stroke-width="1" stroke-linejoin="round"/>
<polyline points="18.5,710.5 21.5,710.5 25.5,710.5 29.5,710.5 32.5,710.5 36.5,709.5 40.5,709.5 43.5,709.5 47.5,709.5 51.5,709.5 54.5,709.5 58.5,709.5 62.5,709.5 65.5,709.5 69.5,709.5 73.5,708.5 76.5,708.5 80.5,708.5 84.5,708.5 87.5,708.5 91.5,708.5 95.5,708.5 98.5,707.5 102.5,707.5 106.5,707.5 109.5,707.5 113.5,707.5 117.5,707.5 120.5,707.5 124.5,706.5 128.5,706.5 131.5,706.5 135.5,706.5 138.5,706.5 142.5,706.5 146.5,706.5 149.5,706.5 153.5,706.5 157.5,706.5 160.5,706.5 164.5,706.5 168.5,706.5 171.5,706.5 175.5,705.5 179.5,705.5 182.5,705.5 186.5,704.5 190.5,704.5 193.5,704.5 197.5,704.5 201.5,704.5 204.5,704.5 208.5,704.5 212.5,704.5 215.5,704.5 219.5,704.5 223.5,704.5 226.5,704.5 230.5,704.5 234.5,704.5 237.5,704.5 241.5,704.5 245.5,704.5 248.5,703.5 252.5,703.5 256.5,703.5 259.5,703.5 263.5,703.5 267.5,703.5 270.5,703.5 274.5,703.5 277.5,703.5 281.5,703.5 285.5,703.5 288.5,703.5 292.5,703.5 296.5,703.5 299.5,703.5 303.5,703.5 307.5,703.5 310.5,702.5 314.5,702.5 318.5,702.5 321.5,702.5 325.5,702.5 329.5,702.5 332.5,702.5 336.5,702.5 340.5,702.5 343.5,702.5 347.5,701.5 351.5,701.5 354.5,701.5 358.5,701.5 362.5,701.5 365.5,701.5 369.5,701.5 373.5,701.5 376.5,700.5 380.5,700.5 384.5,700.5 387.5,700.5 391.5,699.5 395.5,699.5 398.5,699.5 402.5,699.5 405.5,698.5 409.5,698.5 413.5,698.5 416.5,698.5 420.5,697.5 424.5,697.5 427.5,697.5 431.5,697.5 435.5,696.5 438.5,696.5 442.5,696.5 446.5,696.5 449.5,696.5 453.5,695.5 457.5,695.5 460.5,695.5 464.5,695.5 468.5,695.5 471.5,694.5 475.5,694.5 479.5,694.5 482.5,694.5 486.5,694.5 490.5,693.5 493.5,693.5 497.5,693.5 501.5,693.5 504.5,693.5 508.5,693.5 512.5,693.5 515.5,692.5 519.5,692.5 523.5,692.5 526.5,692.5 530.5,692.5 534.5,692.5 537.5,692.5 541.5,691.5 544.5,691.5 548.5,691.5 552.5,691.5 555.5,691.5 559.5,690.5 563.5,690.5 566.5,690.5 570.5,690.5 574.5,690.5 577.5,689.5 581.5,689.5 585.5,689.5 588.5,689.5 592.5,689.5 596.5,688.5 599.5,688.5 603.5,688.5 607.5,687.5 610.5,687.5 614.5,686.5 618.5,686.5 621.5,685.5 625.5,685.5 629.5,684.5 632.5,684.5 636.5,683.5 640.5,683.5 643.5,682.5 647.5,682.5 651.5,681.5 654.5,681.5 658.5,680.5 662.5,680.5 665.5,679.5 669.5,679.5 672.5,678.5 676.5,678.5 680.5,677.5 683.5,677.5 687.5,676.5 691.5,676.5 694.5,675.5 698.5,675.5 702.5,674.5 705.5,674.5 709.5,673.5 713.5,673.5 716.5,672.5 720.5,672.5 724.5,671.5 727.5,671.5 731.5,670.5 735.5,670.5 738.5,669.5 742.5,669.5 746.5,668.5 749.5,668.5 753.5,667.5 757.5,667.5 760.5,666.5 764.5,666.5 768.5,665.5 771.5,665.5 775.5,664.5 779.5,664.5 782.5,663.5 786.5,662.5 790.5,662.5 793.5,661.5 797.5,661.5 801.5,660.5 804.5,659.5 808.5,659.5 811.5,658.5 815.5,658.5 819.5,657.5 822.5,656.5 826.5,656.5 830.5,655.5 833.5,655.5 837.5,654.5 841.5,653.5 844.5,653.5 848.5,652.5 852.5,652.5 855.5,651.5 859.5,650.5 863.5,650.5 866.5,649.5 870.5,649.5 874.5,648.5 877.5,647.5 881.5,647.5 885.5,646.5 888.5,646.5 892.5,645.5 896.5,644.5 899.5,644.5 903.5,643.5 907.5,642.5 910.5,641.5 914.5,641.5 918.5,640.5 921.5,639.5 925.5,638.5 929.5,637.5 932.5,637.5 936.5,636.5 940.5,635.5 943.5,634.5 947.5,633.5 950.5,632.5 954.5,631.5 958.5,630.5 961.5,630.5 965.5,629.5 969.5,628.5 972.5,627.5 976.5,626.5 980.5,625.5 983.5,625.5 987.5,624.5 991.5,623.5 994.5,622.5 998.5,622.5 1002.5,621.5 1005.5,620.5 1009.5,619.5 1013.5,619.5 1016.5,618.5 1020.5,617.5 1024.5,617.5 1027.5,616.5 1031.5,615.5 1035.5,614.5 1038.5,614.5 1042.5,613.5 1046.5,613.5 1049.5,612.5 1053.5,612.5 1057.5,611.5 1060.5,611.5 1064.5,610.5 1068.5,610.5 1071.5,610.5 1075.5,609.5 1078.5,609.5 1082.5,608.5 1086.5,608.5 1089.5,607.5 1093.5,607.5 1097.5,606.5 1100.5,606.5 1104.5,605.5 1108.5,605.5 1111.5,604.5 1115.5,604.5 1119.5,603.5 1122.5,603.5 1126.5,602.5 1130.5,602.5 1133.5,602.5 1137.5,601.5 1141.5,601.5 1144.5,600.5 1148.5,600.5 1152.5,599.5 1155.5,599.5 1159.5,598.5 1163.5,598.5 1166.5,597.5 1170.5,597.5 1174.5,596.5 1177.5,596.5 1181.5,595.5 1185.5,595.5 1188.5,594.5 1192.5,594.5 1196.5,593.5 1199.5,593.5 1203.5,592.5 1207.5,592.5 1210.5,591.5 1214.5,591.5 1217.5,590.5 1221.5,590.5 1225.5,589.5 1228.5,589.5 1232.5,588.5 1236.5,588.5 1239.5,587.5 1243.5,587.5 1247.5,586.5 1250.5,586.5 1254.5,585.5 1258.5,584.5 1261.5,584.5 1265.5,583.5 1269.5,583.5 1272.5,582.5 1276.5,582.5 1280.5,581.5 1283.5,581.5 1287.5,580.5 1291.5,579.5 1294.5,579.5 1298.5,578.5 1302.5,578.5 1305.5,577.5 1309.5,577.5 1313.5,576.5 1316.5,576.5 1320.5,575.5 1324.5,574.5 1327.5,574.5 1331.5,573.5 1335.5,573.5 1338.5,572.5 1342.5,572.5 1345.5,571.5 1349.5,571.5 1353.5,570.5 1356.5,570.5 1360.5,569.5 1364.5,569.5 1367.5,568.5 1371.5,568.5 1375.5,567.5 1378.5,567.5 1382.5,566.5 1386.5,566.5 1389.5,565.5 1393.5,565.5 1397.5,564.5 1400.5,564.5 1404.5,563.5 1408.5,563.5 1411.5,562.5 1415.5,562.5 1419.5,561.5 1422.5,560.5 1426.5,560.5 1430.5,559.5 1433.5,558.5 1437.5,558.5 1441.5,557.5 1444.5,556.5 1448.5,556.5 1452.5,555.5 1455.5,554.5 1459.5,554.5 1463.5,553.5 1466.5,552.5 1470.5,552.5 1474.5,551.5 1477.5,550.5 1481.5,549.5 1484.5,549.5 1488.5,548.5 1492.5,547.5 1495.5,547.5 1499.5,546.5 1503.5,545.5 1506.5,545.5 1510.5,544.5 1514.5,543.5 1517.5,543.5 1521.5,542.5 1525.5,541.5 1528.5,541.5 1532.5,540.5 1536.5,539.5 1539.5,539.5 1543.5,538.5 1547.5,537.5 1550.5,536.5 1554.5,536.5 1558.5,535.5 1561.5,534.5 1565.5,533.5 1569.5,533.5 1572.5,532.5 1576.5,531.5 1580.5,531.5 1583.5,530.5 1587.5,530.5 1591.5,529.5 1594.5,528.5 1598.5,528.5 1602.5,527.5 1605.5,527.5 1609.5,526.5 1613.5,526.5 1616.5,525.5 1620.5,525.5 1623.5,524.5 1627.5,524.5 1631.5,524.5 1634.5,523.5 1638.5,523.5 1642.5,522.5 1645.5,522.5 1649.5,522.5 1653.5,521.5 1656.5,521.5 1660.5,521.5 1664.5,521.5 1667.5,520.5 1671.5,520.5 1675.5,520.5 1678.5,519.5 1682.5,519.5 1686.5,518.5 1689.5,518.5 1693.5,517.5 1697.5,516.5 1700.5,515.5 1704.5,514.5 1708.5,513.5" fill="none" stroke="#fa7060" stroke-width="1"/>
<polyline points="18.5,695.5 21.5,697.5 25.5,698.5 29.5,700.5 32.5,702.5 36.5,703.5 40.5,704.5 43.5,706.5 47.5,708.5 51.5,710.5 54.5,711.5 58.5,713.5 62.5,715.5 65.5,716.5 69.5,716.5 73.5,717.5 76.5,718.5 80.5,719.5 84.5,719.5 87.5,718.5 91.5,718.5 95.5,719.5 98.5,719.5 102.5,719.5 106.5,719.5 109.5,720.5 113.5,720.5 117.5,721.5 120.5,721.5 124.5,721.5 128.5,720.5 131.5,720.5 135.5,721.5 138.5,723.5 142.5,724.5 146.5,725.5 149.5,726.5 153.5,727.5 157.5,728.5 160.5,730.5 164.5,731.5 168.5,732.5 171.5,733.5 175.5,734.5 179.5,735.5 182.5,736.5 186.5,735.5 190.5,734.5 193.5,733.5 197.5,732.5 201.5,731.5 204.5,728.5 208.5,726.5 212.5,724.5 215.5,722.5 219.5,720.5 223.5,718.5 226.5,716.5 230.5,714.5 234.5,712.5 237.5,710.5 241.5,708.5 245.5,707.5 248.5,705.5 252.5,704.5 256.5,704.5 259.5,704.5 263.5,705.5 267.5,707.5 270.5,708.5 274.5,710.5 277.5,713.5 281.5,714.5 285.5,716.5 288.5,716.5 292.5,717.5 296.5,718.5 299.5,718.5 303.5,718.5 307.5,718.5 310.5,717.5 314.5,717.5 318.5,715.5 321.5,715.5 325.5,713.5 329.5,711.5 332.5,709.5 336.5,706.5 340.5,704.5 343.5,701.5 347.5,699.5 351.5,696.5 354.5,694.5 358.5,692.5 362.5,691.5 365.5,690.5 369.5,688.5 373.5,686.5 376.5,685.5 380.5,684.5 384.5,684.5 387.5,683.5 391.5,684.5 395.5,683.5 398.5,684.5 402.5,683.5 405.5,683.5 409.5,682.5 413.5,680.5 416.5,678.5 420.5,675.5 424.5,673.5 427.5,671.5 431.5,669.5 435.5,666.5 438.5,664.5 442.5,661.5 446.5,659.5 449.5,656.5 453.5,652.5 457.5,649.5 460.5,646.5 464.5,642.5 468.5,639.5 471.5,636.5 475.5,634.5 479.5,633.5 482.5,632.5 486.5,631.5 490.5,630.5 493.5,630.5 497.5,630.5 501.5,629.5 504.5,629.5 508.5,629.5 512.5,629.5 515.5,630.5 519.5,632.5 523.5,633.5 526.5,634.5 530.5,636.5 534.5,637.5 537.5,638.5 541.5,639.5 544.5,639.5 548.5,639.5 552.5,639.5 555.5,640.5 559.5,641.5 563.5,642.5 566.5,643.5 570.5,644.5 574.5,646.5 577.5,647.5 581.5,648.5 585.5,648.5 588.5,646.5 592.5,646.5 596.5,646.5 599.5,646.5 603.5,646.5 607.5,645.5 610.5,645.5 614.5,644.5 618.5,644.5 621.5,642.5 625.5,642.5 629.5,640.5 632.5,638.5 636.5,635.5 640.5,632.5 643.5,629.5 647.5,626.5 651.5,623.5 654.5,620.5 658.5,618.5 662.5,616.5 665.5,614.5 669.5,611.5 672.5,607.5 676.5,604.5 680.5,602.5 683.5,600.5 687.5,599.5 691.5,598.5 694.5,597.5 698.5,595.5 702.5,594.5 705.5,593.5 709.5,592.5 713.5,592.5 716.5,592.5 720.5,593.5 724.5,593.5 727.5,592.5 731.5,591.5 735.5,593.5 738.5,594.5 742.5,595.5 746.5,596.5 749.5,597.5 753.5,597.5 757.5,597.5 760.5,596.5 764.5,594.5 768.5,594.5 771.5,593.5 775.5,592.5 779.5,593.5 782.5,592.5 786.5,592.5 790.5,592.5 793.5,591.5 797.5,590.5 801.5,590.5 804.5,590.5 808.5,590.5 811.5,590.5 815.5,589.5 819.5,590.5 822.5,590.5 826.5,592.5 830.5,593.5 833.5,595.5 837.5,597.5 841.5,599.5 844.5,602.5 848.5,604.5 852.5,606.5 855.5,609.5 859.5,610.5 863.5,612.5 866.5,614.5 870.5,615.5 874.5,617.5 877.5,618.5 881.5,618.5 885.5,618.5 888.5,619.5 892.5,619.5 896.5,618.5 899.5,617.5 903.5,616.5 907.5,614.5 910.5,612.5 914.5,609.5 918.5,604.5 921.5,598.5 925.5,593.5 929.5,588.5 932.5,583.5 936.5,578.5 940.5,573.5 943.5,568.5 947.5,563.5 950.5,557.5 954.5,552.5 958.5,547.5 961.5,542.5 965.5,539.5 969.5,537.5 972.5,534.5 976.5,532.5 980.5,531.5 983.5,530.5 987.5,532.5 991.5,534.5 994.5,537.5 998.5,541.5 1002.5,544.5 1005.5,546.5 1009.5,549.5 1013.5,551.5 1016.5,552.5 1020.5,555.5 1024.5,558.5 1027.5,562.5 1031.5,564.5 1035.5,567.5 1038.5,569.5 1042.5,570.5 1046.5,572.5 1049.5,573.5 1053.5,575.5 1057.5,577.5 1060.5,577.5 1064.5,578.5 1068.5,578.5 1071.5,578.5 1075.5,577.5 1078.5,579.5 1082.5,580.5 1086.5,582.5 1089.5,582.5 1093.5,582.5 1097.5,584.5 1100.5,587.5 1104.5,589.5 1108.5,592.5 1111.5,595.5 1115.5,597.5 1119.5,598.5 1122.5,599.5 1126.5,598.5 1130.5,596.5 1133.5,594.5 1137.5,593.5 1141.5,590.5 1144.5,589.5 1148.5,588.5 1152.5,586.5 1155.5,585.5 1159.5,583.5 1163.5,582.5 1166.5,580.5 1170.5,577.5 1174.5,572.5 1177.5,568.5 1181.5,564.5 1185.5,560.5 1188.5,556.5 1192.5,552.5 1196.5,549.5 1199.5,545.5 1203.5,542.5 1207.5,540.5 1210.5,538.5 1214.5,537.5 1217.5,535.5 1221.5,533.5 1225.5,530.5 1228.5,527.5 1232.5,526.5 1236.5,524.5 1239.5,523.5 1243.5,523.5 1247.5,523.5 1250.5,523.5 1254.5,523.5 1258.5,523.5 1261.5,522.5 1265.5,523.5 1269.5,525.5 1272.5,528.5 1276.5,531.5 1280.5,534.5 1283.5,535.5 1287.5,536.5 1291.5,538.5 1294.5,539.5 1298.5,541.5 1302.5,542.5 1305.5,542.5 1309.5,543.5 1313.5,543.5 1316.5,544.5 1320.5,545.5 1324.5,544.5 1327.5,542.5 1331.5,541.5 1335.5,540.5 1338.5,538.5 1342.5,536.5 1345.5,534.5 1349.5,532.5 1353.5,530.5 1356.5,530.5 1360.5,530.5 1364.5,528.5 1367.5,527.5 1371.5,525.5 1375.5,523.5 1378.5,522.5 1382.5,520.5 1386.5,518.5 1389.5,516.5 1393.5,514.5 1397.5,512.5 1400.5,512.5 1404.5,510.5 1408.5,508.5 1411.5,506.5 1415.5,505.5 1419.5,503.5 1422.5,502.5 1426.5,500.5 1430.5,496.5 1433.5,492.5 1437.5,488.5 1441.5,484.5 1444.5,481.5 1448.5,478.5 1452.5,474.5 1455.5,471.5 1459.5,467.5 1463.5,462.5 1466.5,458.5 1470.5,455.5 1474.5,452.5 1477.5,453.5 1481.5,453.5 1484.5,451.5 1488.5,450.5 1492.5,448.5 1495.5,446.5 1499.5,445.5 1503.5,447.5 1506.5,448.5 1510.5,449.5 1514.5,451.5 1517.5,454.5 1521.5,456.5 1525.5,458.5 1528.5,460.5 1532.5,463.5 1536.5,465.5 1539.5,467.5 1543.5,469.5 1547.5,470.5 1550.5,470.5 1554.5,471.5 1558.5,473.5 1561.5,475.5 1565.5,477.5 1569.5,479.5 1572.5,481.5 1576.5,482.5 1580.5,483.5 1583.5,484.5 1587.5,485.5 1591.5,485.5 1594.5,487.5 1598.5,487.5 1602.5,486.5 1605.5,486.5 1609.5,488.5 1613.5,489.5 1616.5,488.5 1620.5,488.5 1623.5,489.5 1627.5,488.5 1631.5,488.5 1634.5,488.5 1638.5,488.5 1642.5,489.5 1645.5,488.5 1649.5,488.5 1653.5,487.5 1656.5,486.5 1660.5,486.5 1664.5,483.5 1667.5,481.5 1671.5,481.5 1675.5,481.5 1678.5,481.5 1682.5,480.5 1686.5,478.5 1689.5,475.5 1693.5,469.5 1697.5,465.5 1700.5,459.5 1704.5,449.5 1708.5,436.5" fill="none" stroke="#fccb3a" stroke-width="1" stroke-linejoin="round"/>
<polyline points="18.5,712.5 21.5,712.5 25.5,713.5 29.5,713.5 32.5,712.5 36.5,711.5 40.5,712.5 43.5,713.5 47.5,716.5 51.5,719.5 54.5,723.5 58.5,727.5 62.5,729.5 65.5,726.5 69.5,724.5 73.5,723.5 76.5,720.5 80.5,720.5 84.5,719.5 87.5,718.5 91.5,717.5 95.5,717.5 98.5,715.5 102.5,714.5 106.5,716.5 109.5,716.5 113.5,717.5 117.5,718.5 120.5,723.5 124.5,725.5 128.5,726.5 131.5,727.5 135.5,731.5 138.5,734.5 142.5,738.5 146.5,741.5 149.5,742.5 153.5,742.5 157.5,741.5 160.5,742.5 164.5,742.5 168.5,741.5 171.5,739.5 175.5,738.5 179.5,736.5 182.5,734.5 186.5,730.5 190.5,725.5 193.5,717.5 197.5,711.5 201.5,706.5 204.5,700.5 208.5,698.5 212.5,699.5 215.5,699.5 219.5,700.5 223.5,702.5 226.5,703.5 230.5,701.5 234.5,700.5 237.5,701.5 241.5,702.5 245.5,702.5 248.5,704.5 252.5,705.5 256.5,708.5 259.5,712.5 263.5,717.5 267.5,724.5 270.5,729.5 274.5,731.5 277.5,735.5 281.5,736.5 285.5,734.5 288.5,729.5 292.5,727.5 296.5,721.5 299.5,715.5 303.5,709.5 307.5,707.5 310.5,702.5 314.5,698.5 318.5,694.5 321.5,692.5 325.5,687.5 329.5,683.5 332.5,680.5 336.5,680.5 340.5,680.5 343.5,682.5 347.5,685.5 351.5,686.5 354.5,688.5 358.5,688.5 362.5,689.5 365.5,690.5 369.5,689.5 373.5,682.5 376.5,682.5 380.5,678.5 384.5,677.5 387.5,678.5 391.5,684.5 395.5,683.5 398.5,686.5 402.5,680.5 405.5,677.5 409.5,672.5 413.5,666.5 416.5,658.5 420.5,653.5 424.5,648.5 427.5,646.5 431.5,643.5 435.5,643.5 438.5,645.5 442.5,641.5 446.5,634.5 449.5,629.5 453.5,622.5 457.5,617.5 460.5,616.5 464.5,615.5 468.5,616.5 471.5,620.5 475.5,623.5 479.5,626.5 482.5,633.5 486.5,635.5 490.5,636.5 493.5,637.5 497.5,635.5 501.5,634.5 504.5,636.5 508.5,637.5 512.5,638.5 515.5,642.5 519.5,644.5 523.5,643.5 526.5,646.5 530.5,645.5 534.5,644.5 537.5,642.5 541.5,641.5 544.5,637.5 548.5,638.5 552.5,636.5 555.5,638.5 559.5,643.5 563.5,649.5 566.5,651.5 570.5,656.5 574.5,658.5 577.5,659.5 581.5,660.5 585.5,657.5 588.5,650.5 592.5,647.5 596.5,641.5 599.5,639.5 603.5,637.5 607.5,639.5 610.5,636.5 614.5,633.5 618.5,626.5 621.5,623.5 625.5,622.5 629.5,620.5 632.5,617.5 636.5,615.5 640.5,612.5 643.5,605.5 647.5,600.5 651.5,599.5 654.5,600.5 658.5,602.5 662.5,600.5 665.5,598.5 669.5,593.5 672.5,586.5 676.5,580.5 680.5,580.5 683.5,580.5 687.5,586.5 691.5,592.5 694.5,593.5 698.5,595.5 702.5,597.5 705.5,592.5 709.5,590.5 713.5,594.5 716.5,595.5 720.5,597.5 724.5,601.5 727.5,600.5 731.5,599.5 735.5,601.5 738.5,602.5 742.5,602.5 746.5,602.5 749.5,603.5 753.5,598.5 757.5,593.5 760.5,587.5 764.5,585.5 768.5,578.5 771.5,577.5 775.5,577.5 779.5,580.5 782.5,581.5 786.5,586.5 790.5,590.5 793.5,591.5 797.5,592.5 801.5,594.5 804.5,594.5 808.5,595.5 811.5,598.5 815.5,599.5 819.5,600.5 822.5,602.5 826.5,605.5 830.5,607.5 833.5,610.5 837.5,612.5 841.5,615.5 844.5,618.5 848.5,620.5 852.5,622.5 855.5,628.5 859.5,629.5 863.5,629.5 866.5,629.5 870.5,630.5 874.5,626.5 877.5,624.5 881.5,619.5 885.5,617.5 888.5,613.5 892.5,608.5 896.5,604.5 899.5,601.5 903.5,596.5 907.5,592.5 910.5,587.5 914.5,577.5 918.5,567.5 921.5,552.5 925.5,539.5 929.5,531.5 932.5,528.5 936.5,524.5 940.5,528.5 943.5,529.5 947.5,524.5 950.5,520.5 954.5,515.5 958.5,513.5 961.5,510.5 965.5,513.5 969.5,522.5 972.5,531.5 976.5,536.5 980.5,545.5 983.5,553.5 987.5,558.5 991.5,565.5 994.5,572.5 998.5,579.5 1002.5,585.5 1005.5,585.5 1009.5,587.5 1013.5,581.5 1016.5,576.5 1020.5,571.5 1024.5,569.5 1027.5,566.5 1031.5,566.5 1035.5,567.5 1038.5,567.5 1042.5,568.5 1046.5,569.5 1049.5,574.5 1053.5,577.5 1057.5,584.5 1060.5,587.5 1064.5,589.5 1068.5,590.5 1071.5,590.5 1075.5,588.5 1078.5,592.5 1082.5,595.5 1086.5,597.5 1089.5,594.5 1093.5,590.5 1097.5,588.5 1100.5,593.5 1104.5,596.5 1108.5,607.5 1111.5,617.5 1115.5,619.5 1119.5,617.5 1122.5,611.5 1126.5,602.5 1130.5,588.5 1133.5,578.5 1137.5,565.5 1141.5,555.5 1144.5,552.5 1148.5,555.5 1152.5,559.5 1155.5,564.5 1159.5,568.5 1163.5,565.5 1166.5,561.5 1170.5,551.5 1174.5,543.5 1177.5,538.5 1181.5,537.5 1185.5,534.5 1188.5,537.5 1192.5,536.5 1196.5,535.5 1199.5,526.5 1203.5,519.5 1207.5,511.5 1210.5,510.5 1214.5,507.5 1217.5,511.5 1221.5,517.5 1225.5,521.5 1228.5,521.5 1232.5,523.5 1236.5,523.5 1239.5,523.5 1243.5,525.5 1247.5,525.5 1250.5,528.5 1254.5,532.5 1258.5,533.5 1261.5,533.5 1265.5,537.5 1269.5,540.5 1272.5,546.5 1276.5,554.5 1280.5,557.5 1283.5,556.5 1287.5,553.5 1291.5,549.5 1294.5,546.5 1298.5,548.5 1302.5,549.5 1305.5,548.5 1309.5,545.5 1313.5,541.5 1316.5,538.5 1320.5,536.5 1324.5,535.5 1327.5,529.5 1331.5,523.5 1335.5,517.5 1338.5,511.5 1342.5,509.5 1345.5,513.5 1349.5,518.5 1353.5,519.5 1356.5,524.5 1360.5,527.5 1364.5,526.5 1367.5,526.5 1371.5,525.5 1375.5,519.5 1378.5,516.5 1382.5,511.5 1386.5,507.5 1389.5,505.5 1393.5,503.5 1397.5,497.5 1400.5,495.5 1404.5,489.5 1408.5,482.5 1411.5,478.5 1415.5,478.5 1419.5,479.5 1422.5,485.5 1426.5,486.5 1430.5,482.5 1433.5,475.5 1437.5,466.5 1441.5,455.5 1444.5,450.5 1448.5,446.5 1452.5,445.5 1455.5,444.5 1459.5,439.5 1463.5,428.5 1466.5,424.5 1470.5,419.5 1474.5,420.5 1477.5,432.5 1481.5,446.5 1484.5,452.5 1488.5,459.5 1492.5,462.5 1495.5,458.5 1499.5,457.5 1503.5,465.5 1506.5,468.5 1510.5,471.5 1514.5,476.5 1517.5,483.5 1521.5,484.5 1525.5,486.5 1528.5,487.5 1532.5,485.5 1536.5,474.5 1539.5,466.5 1543.5,461.5 1547.5,461.5 1550.5,462.5 1554.5,468.5 1558.5,476.5 1561.5,485.5 1565.5,487.5 1569.5,493.5 1572.5,499.5 1576.5,500.5 1580.5,499.5 1583.5,499.5 1587.5,500.5 1591.5,500.5 1594.5,503.5 1598.5,502.5 1602.5,497.5 1605.5,491.5 1609.5,486.5 1613.5,475.5 1616.5,466.5 1620.5,468.5 1623.5,470.5 1627.5,467.5 1631.5,475.5 1634.5,483.5 1638.5,490.5 1642.5,494.5 1645.5,499.5 1649.5,498.5 1653.5,496.5 1656.5,490.5 1660.5,487.5 1664.5,481.5 1667.5,476.5 1671.5,476.5 1675.5,478.5 1678.5,473.5 1682.5,473.5 1686.5,464.5 1689.5,445.5 1693.5,417.5 1697.5,406.5 1700.5,382.5 1704.5,358.5 1708.5,327.5" fill="none" stroke="#84d0ff" stroke-width="1" stroke-linejoin="round"/>
<rect x="17" y="505" width="1724" height="2" fill="#ffff1e"/>
<path d="M161.5,754.5H195" stroke="#e8c400" stroke-width="1" stroke-dasharray="3.5 1.7"/>
<rect x="1743" y="219" width="85" height="29.5" fill="#3dc45d"/>
<path d="M67.6,130.3h6.2l-3.1,3.8z" fill="#8d96a8" stroke="#8d96a8" stroke-width="1" stroke-linejoin="round"/>
<path d="M130.5,130.3h6.2l-3.1,3.8z" fill="#8d96a8" stroke="#8d96a8" stroke-width="1" stroke-linejoin="round"/>
<path d="M193.5,130.3h6.2l-3.1,3.8z" fill="#8d96a8" stroke="#8d96a8" stroke-width="1" stroke-linejoin="round"/>
<path d="M256.5,130.3h6.2l-3.1,3.8z" fill="#8d96a8" stroke="#8d96a8" stroke-width="1" stroke-linejoin="round"/>
<path d="M319.5,130.3h6.2l-3.1,3.8z" fill="#8d96a8" stroke="#8d96a8" stroke-width="1" stroke-linejoin="round"/>
<path d="M382.5,130.3h6.2l-3.1,3.8z" fill="#8d96a8" stroke="#8d96a8" stroke-width="1" stroke-linejoin="round"/>
<path d="M445.5,130.3h6.2l-3.1,3.8z" fill="#8d96a8" stroke="#8d96a8" stroke-width="1" stroke-linejoin="round"/>
<path d="M272.5,172.5h9.5l-4.75,6.4z" fill="#8b94a6" stroke="#8b94a6" stroke-width="1" stroke-linejoin="round"/>
<path d="M1804,30h10l-5.0,6.5z" fill="#8b94a6" stroke="#8b94a6" stroke-width="1" stroke-linejoin="round"/>
<path d="M63.5,208.5h6.5l-3.25,4.5z" fill="#8b94a6" stroke="#8b94a6" stroke-width="1" stroke-linejoin="round"/>
<rect x="205.6" y="24.9" width="16.8" height="19" rx="2.6" fill="none" stroke="#e4e6ea" stroke-width="1.6"/>
<path d="M209.5,30h4.8M209.5,34.5h9.4M209.5,39h9.4" stroke="#e4e6ea" stroke-width="1.5" fill="none"/>
<path class="ic" d="M1388.8,24.8h20v14.6h-20z M1398.8,39.4v4.6 M1392,44.1h14.2 M1392.6,34.2l4.3,-4.2l3.3,3.3l5.2,-4.6 M1402,28.6h3.6v3.6" />
<path class="ic" d="M1434,25.2V43.6H1453 M1439.4,38.9l1.3,-4.9l8.6,-8.6a1.3,1.3 0 0 1 1.8,0l1.8,1.8a1.3,1.3 0 0 1 0,1.8l-8.6,8.6z M1447.4,27.4l3.6,3.6" />
<path class="ic" d="M1480.4,38.8A10.4,10.4 0 1 1 1484.9,43.2 M1477.4,36.2L1480.4,39.2L1483.8,36.9" />
<path class="ic" d="M1532.3,26.1L1532.7,23.2A11,11 0 0 1 1535.7,23.2L1536.1,26.1A8.2,8.2 0 0 1 1538.5,27.1L1540.8,25.3A11,11 0 0 1 1543.0,27.5L1541.2,29.8A8.2,8.2 0 0 1 1542.2,32.2L1545.1,32.6A11,11 0 0 1 1545.1,35.6L1542.2,36.0A8.2,8.2 0 0 1 1541.2,38.4L1543.0,40.7A11,11 0 0 1 1540.8,42.9L1538.5,41.1A8.2,8.2 0 0 1 1536.1,42.1L1535.7,45.0A11,11 0 0 1 1532.7,45.0L1532.3,42.1A8.2,8.2 0 0 1 1529.9,41.1L1527.6,42.9A11,11 0 0 1 1525.4,40.7L1527.2,38.4A8.2,8.2 0 0 1 1526.2,36.0L1523.3,35.6A11,11 0 0 1 1523.3,32.6L1526.2,32.2A8.2,8.2 0 0 1 1527.2,29.8L1525.4,27.5A11,11 0 0 1 1527.6,25.3L1529.9,27.1A8.2,8.2 0 0 1 1532.3,26.1z" />
<circle class="ic" cx="1534.2" cy="34.1" r="3.3"/>
<path class="ic" d="M1574.4,24.6H1568.8V30.2 M1568.8,24.6L1575.8,31.6 M1584.0,24.6H1589.6V30.2 M1589.6,24.6L1582.6,31.6 M1574.4,44.4H1568.8V38.8 M1568.8,44.4L1575.8,37.4 M1584.0,44.4H1589.6V38.8 M1589.6,44.4L1582.6,37.4 " />
<path class="ic" d="M1613.8,24.6h8v7.4h-8z M1613.8,36.8h8v7.4h-8z M1626.4,24.6h8v7.4h-8z M1626.4,36.8h8v7.4h-8z " />
<path class="ic" d="M34.5,132.5H58.6" />
<path class="ic" d="M101.6,124.9H117.8V140.6H101.6z" />
<circle cx="101.6" cy="124.9" r="2.1" fill="#8d96a8"/>
<circle cx="101.6" cy="140.6" r="2.1" fill="#8d96a8"/>
<circle cx="117.8" cy="124.9" r="2.1" fill="#8d96a8"/>
<circle cx="117.8" cy="140.6" r="2.1" fill="#8d96a8"/>
<path class="ic" d="M162.7,141 L165.3,130 L168.9,136.4 L172.6,124.1 L176.4,136.4 L179.8,130 L182.7,141" />
<circle cx="162.7" cy="141" r="1.9" fill="#8d96a8"/>
<circle cx="165.3" cy="130" r="1.9" fill="#8d96a8"/>
<circle cx="168.9" cy="136.4" r="1.9" fill="#8d96a8"/>
<circle cx="172.6" cy="124.1" r="1.9" fill="#8d96a8"/>
<circle cx="176.4" cy="136.4" r="1.9" fill="#8d96a8"/>
<circle cx="179.8" cy="130" r="1.9" fill="#8d96a8"/>
<circle cx="182.7" cy="141" r="1.9" fill="#8d96a8"/>
<path class="ic" d="M225,123.6H245.6 M235,127.7H245.6 M235,131.8H245.6 M225,137H245.6 M225,141.5H245.6" style="stroke-width:1.4"/>
<text x="224.6" y="134" font-family="Liberation Sans,sans-serif" font-size="9.5" font-weight="bold" fill="#8d96a8">G</text>
<path class="ic" d="M307.2,141.6L288.8,123.6 M302.6,124.2L288.8,123.6L290.4,136.4" />
<path class="ic" d="M352,122.9H370.8 M352,142.3H370.8 M361.4,123V142.3" />
<path d="M358.6,127.8l2.8,-4.2l2.8,4.2z" fill="#8d96a8" stroke="#8d96a8" stroke-width="1" stroke-linejoin="round"/>
<path class="ic" d="M414.4,123.9h20.4a2,2 0 0 1 2,2v12.8a2,2 0 0 1 -2,2h-6.9l-3.3,3l-3.3,-3h-6.9a2,2 0 0 1 -2,-2v-12.8a2,2 0 0 1 2,-2z" />
<text x="424.6" y="136" text-anchor="middle" font-family="Liberation Sans,sans-serif" font-size="10" font-weight="bold" fill="#8d96a8">123</text>
<path d="M471.5,122.4V142.6 M727.5,122.4V142.6" stroke="#3a4452" stroke-width="1"/>
<path class="ic" d="M494.7,140l1.6,-5.8l11.2,-12.4a1.2,1.2 0 0 1 1.7,-0.1l2.6,2.3a1.2,1.2 0 0 1 0.1,1.7l-11.3,12.5z M505.8,123.6l4.4,3.9 M496.3,134.2l3.6,3.9 M492.4,142.6c4,1 7,-0.6 10,-2.2c3.4,-1.8 6.6,-1 10.2,2.4" />
<path class="ic" d="M544.6,133.2h14a2,2 0 0 1 2,2v5.5a2,2 0 0 1 -2,2h-14a2,2 0 0 1 -2,-2v-5.5a2,2 0 0 1 2,-2z M546,133v-3.6a5.6,5.6 0 0 1 10.8,-2 M551.7,135.9v3" />
<path class="ic" d="M587.8,132.5c6,-10 17.4,-10 23.4,0c-6,10 -17.4,10 -23.4,0z" />
<circle cx="599.5" cy="132.4" r="4.1" fill="#8d96a8"/><circle cx="600.3" cy="130.4" r="1.1" fill="#242b38"/>
<path class="ic" d="M638.2,143.2V131.6a9.2,9.2 0 0 1 18.4,0V143.2h-4.4V131.8a4.8,4.8 0 0 0 -9.6,0V143.2z M638.2,139.2h4.4 M652.2,139.2h4.4" />
<path class="ic" d="M695.6,122h9a2,2 0 0 1 2,2v8.8a2,2 0 0 1 -2,2h-6.8 M693.6,130.4V124a2,2 0 0 1 2,-2 M686.4,130.9h9.2a2,2 0 0 1 2,2v8.6a2,2 0 0 1 -2,2h-9.2a2,2 0 0 1 -2,-2v-8.6a2,2 0 0 1 2,-2z" />
<path class="ic" d="M749.8,127.6H769.8 M755.6,127.4a4.2,4.2 0 0 1 8.4,0 M752,127.8l0.9,11a2.6,2.6 0 0 0 2.6,2.4h8.6a2.6,2.6 0 0 0 2.6,-2.4l0.9,-11 M757.5,131v8 M762.2,131v8" />
</svg>
<div class="t" style="left:30px;top:19px;font-size:21px;color:#e4e6ea">小麦主连 <span style="position:absolute;left:91px;top:-1px">2205</span></div>
<div class="p" style="left:183px;top:28px;width:1px;height:14px;background:#7c8596"></div>
<div class="t" style="left:232px;top:20px;font-size:18px;color:#e4e6ea">合约资料</div>
<div class="t" style="left:1673px;top:22px;font-size:18px;color:#8b94a6">未命名图表布局</div>
<div class="p" style="left:1654px;top:28px;width:1px;height:15px;background:#7c8596"></div>
<div class="t" style="left:29px;top:73px;font-size:18px;color:#8b94a6">分时</div>
<div class="t" style="left:80px;top:73px;font-size:18px;color:#ffd21c">日K</div>
<div class="t" style="left:125px;top:73px;font-size:18px;color:#8b94a6">周K</div>
<div class="t" style="left:169px;top:73px;font-size:18px;color:#8b94a6">月K</div>
<div class="t" style="left:214px;top:73px;font-size:18px;color:#8b94a6">1分</div>
<div class="t" style="left:258px;top:73px;font-size:18px;color:#8b94a6">3分</div>
<div class="t" style="left:302px;top:73px;font-size:18px;color:#8b94a6">5分</div>
<div class="t" style="left:346px;top:73px;font-size:18px;color:#8b94a6">10分</div>
<div class="t" style="left:401px;top:73px;font-size:18px;color:#8b94a6">15分</div>
<div class="t" style="left:456px;top:73px;font-size:18px;color:#8b94a6">30分</div>
<div class="t" style="left:510px;top:73px;font-size:18px;color:#8b94a6">45分</div>
<div class="t" style="left:565px;top:73px;font-size:18px;color:#8b94a6">1小时</div>
<div class="t" style="left:627px;top:73px;font-size:18px;color:#8b94a6">2小时</div>
<div class="t" style="left:689px;top:73px;font-size:18px;color:#8b94a6">3小时</div>
<div class="t" style="left:750.5px;top:73px;font-size:18px;color:#8b94a6">4小时</div>
<div class="t" style="left:813.5px;top:73px;font-size:18px;color:#8b94a6">6小时</div>
<div class="t" style="left:1693px;top:72px;font-size:19px;color:#8b94a6">%</div>
<div class="t" style="left:1726px;top:72px;font-size:19px;color:#8b94a6">Log</div>
<div class="t" style="left:1773px;top:72px;font-size:19px;color:#ffd21c;letter-spacing:0.8px">Auto</div>
<div class="t" style="left:24px;top:162px;font-size:19.5px;color:#e4e6ea">ZWmain</div>
<div class="t" style="left:103.5px;top:162px;font-size:18px;color:#8b94a6">小麦主连 <span style="position:absolute;left:76.5px;font-size:19.3px">2205</span></div>
<div class="p" style="left:231px;top:169px;width:1px;height:15px;background:#8b94a6"></div>
<div class="t" style="left:238.5px;top:162px;font-size:18.5px;color:#8b94a6">日K</div>
<div class="t" style="left:297.5px;top:162px;font-size:19.3px;color:#3dc45d">1059.00 +75.00 +7.62%</div>
<div class="t" style="left:24px;top:196px;font-size:19.6px;letter-spacing:0.9px;color:#d6d8dc">MA</div>
<div class="t" style="left:85px;top:196px;font-size:19.6px;color:#62bdf7">MA5:954.05</div>
<div class="t" style="left:204.5px;top:196px;font-size:19.6px;color:#e6437c">MA50:799.48</div>
<div class="t" style="left:335.5px;top:196px;font-size:19.6px;color:#f2c230">MA20:831.70</div>
<div class="t" style="left:467px;top:196px;font-size:19.6px;color:#f2685a">MA200:743.45</div>
<div class="t" style="left:1747.5px;top:204.5px;font-size:19.3px;color:#cfd1d5">1075.73</div>
<div class="t" style="left:1747.5px;top:259.5px;font-size:19.3px;color:#cfd1d5">1014.26</div>
<div class="t" style="left:1747.5px;top:313.5px;font-size:19.3px;color:#cfd1d5">952.79</div>
<div class="t" style="left:1747.5px;top:368.5px;font-size:19.3px;color:#cfd1d5">891.32</div>
<div class="t" style="left:1747.5px;top:422.5px;font-size:19.3px;color:#cfd1d5">829.85</div>
<div class="t" style="left:1747.5px;top:477.5px;font-size:19.3px;color:#cfd1d5">768.38</div>
<div class="t" style="left:1747.5px;top:531.5px;font-size:19.3px;color:#cfd1d5">706.91</div>
<div class="t" style="left:1747.5px;top:586.5px;font-size:19.3px;color:#cfd1d5">645.44</div>
<div class="t" style="left:1747.5px;top:640.5px;font-size:19.3px;color:#cfd1d5">583.97</div>
<div class="t" style="left:1747.5px;top:695.5px;font-size:19.3px;color:#cfd1d5">522.50</div>
<div class="t" style="left:1747.5px;top:749.5px;font-size:19.3px;color:#cfd1d5">461.03</div>
<div class="p" style="left:1743px;top:219px;width:85px;height:30px;background:#3dc45d"></div>
<div class="t" style="left:1748.5px;top:220px;font-size:19.3px;color:#fff">1059.00</div>
<div class="t" style="left:131px;width:81px;text-align:center;top:796px;font-size:18.3px;color:#8b94a6">七月</div>
<div class="t" style="left:288px;width:81px;text-align:center;top:796px;font-size:18.3px;color:#8b94a6">九月</div>
<div class="t" style="left:446px;width:81px;text-align:center;top:796px;font-size:18.3px;color:#8b94a6">十一月</div>
<div class="t" style="left:597.5px;width:81px;text-align:center;top:795px;font-size:19.2px;color:#8b94a6">2021</div>
<div class="t" style="left:738px;width:81px;text-align:center;top:796px;font-size:18.3px;color:#8b94a6">三月</div>
<div class="t" style="left:899px;width:81px;text-align:center;top:796px;font-size:18.3px;color:#8b94a6">五月</div>
<div class="t" style="left:1053px;width:81px;text-align:center;top:796px;font-size:18.3px;color:#8b94a6">七月</div>
<div class="t" style="left:1211px;width:81px;text-align:center;top:796px;font-size:18.3px;color:#8b94a6">九月</div>
<div class="t" style="left:1364px;width:81px;text-align:center;top:796px;font-size:18.3px;color:#8b94a6">十一月</div>
<div class="t" style="left:1520.5px;width:81px;text-align:center;top:795px;font-size:19.2px;color:#8b94a6">2022</div>
<div class="t" style="left:1664px;width:81px;text-align:center;top:796px;font-size:18.3px;color:#8b94a6">三月</div>
<div class="t" style="left:1604.5px;top:219px;font-size:19.4px;color:#e8c400">1059.00</div>
<div class="t" style="left:194.3px;top:739.5px;font-size:19px;color:#e8c400">471.00</div>
</body></html>
